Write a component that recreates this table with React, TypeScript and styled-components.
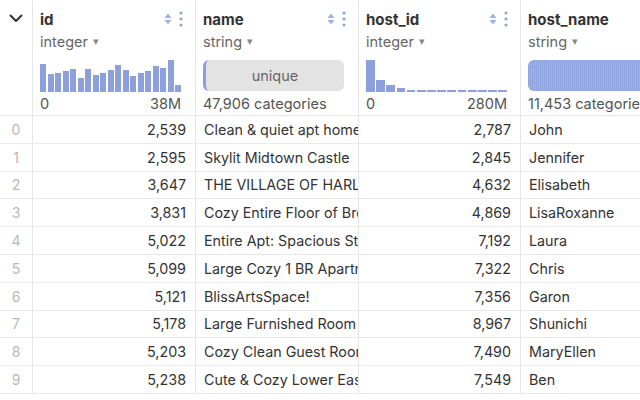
import styled, { createGlobalStyle } from "styled-components";

const GlobalStyle = createGlobalStyle`
  body {
    margin: 0;
    background: #ffffff;
    font-family: "Inter", "Noto Sans", sans-serif;
    color: #333333;
    overflow: hidden;
  }
`;

const COLS = "33px 163px 163px 162px 200px";
const ROW_H = 27.8;

const BAR_COLOR = "#8da0db";

type Column = {
  name: string;
  type: string;
  kind: "hist" | "unique" | "stripes";
  bars?: number[];
  min?: string;
  max?: string;
  categories?: string;
  align: "left" | "right";
};

const COLUMNS: Column[] = [
  {
    name: "id",
    type: "integer",
    kind: "hist",
    bars: [27.7, 17.7, 19, 21, 23, 14.4, 23, 17, 19, 21.7, 27.4, 21.7, 16, 19, 21.4, 26, 23.7, 32, 7.4],
    min: "0",
    max: "38M",
    align: "right",
  },
  {
    name: "name",
    type: "string",
    kind: "unique",
    categories: "47,906 categories",
    align: "left",
  },
  {
    name: "host_id",
    type: "integer",
    kind: "hist",
    bars: [32, 11.7, 6.7, 4, 2.3, 2.3, 2.3, 2.3, 1.7, 1.7, 2.3, 2.3, 1.7, 1.7],
    min: "0",
    max: "280M",
    align: "right",
  },
  {
    name: "host_name",
    type: "string",
    kind: "stripes",
    categories: "11,453 categories",
    align: "left",
  },
];

const ROWS: [string, string, string, string][] = [
  ["2,539", "Clean & quiet apt home by the park", "2,787", "John"],
  ["2,595", "Skylit Midtown Castle", "2,845", "Jennifer"],
  ["3,647", "THE VILLAGE OF HARLEM....NEW YORK !", "4,632", "Elisabeth"],
  ["3,831", "Cozy Entire Floor of Brownstone", "4,869", "LisaRoxanne"],
  ["5,022", "Entire Apt: Spacious Studio/Loft by central park", "7,192", "Laura"],
  ["5,099", "Large Cozy 1 BR Apartment In Midtown East", "7,322", "Chris"],
  ["5,121", "BlissArtsSpace!", "7,356", "Garon"],
  ["5,178", "Large Furnished Room Near B'way", "8,967", "Shunichi"],
  ["5,203", "Cozy Clean Guest Room - Family Apt", "7,490", "MaryEllen"],
  ["5,238", "Cute & Cozy Lower East Side 1 bdrm", "7,549", "Ben"],
];

const SortIcon = () => (
  <svg width="8" height="12" viewBox="0 0 8 12">
    <path d="M4 0.5 L7.5 5 L0.5 5 Z" fill="#9db3df" />
    <path d="M4 11.5 L7.5 7 L0.5 7 Z" fill="#9db3df" />
  </svg>
);

const MenuIcon = () => (
  <svg width="4" height="16" viewBox="0 0 4 16">
    <circle cx="2" cy="2" r="1.6" fill="#8fa6d8" />
    <circle cx="2" cy="8" r="1.6" fill="#8fa6d8" />
    <circle cx="2" cy="14" r="1.6" fill="#8fa6d8" />
  </svg>
);

const Chevron = () => (
  <svg width="14" height="9" viewBox="0 0 14 9">
    <path d="M1.5 1.5 L7 7 L12.5 1.5" fill="none" stroke="#333" strokeWidth="2" strokeLinecap="round" strokeLinejoin="round" />
  </svg>
);

export default function App() {
  return (
    <>
      <GlobalStyle />
      <Grid>
        <HeaderRow>
          <CornerCell>
            <Chevron />
          </CornerCell>
          {COLUMNS.map((col) => (
            <HeaderCell key={col.name}>
              <TitleLine>
                <Title>{col.name}</Title>
                <Icons>
                  <SortIcon />
                  <MenuIcon />
                </Icons>
              </TitleLine>
              <TypeLine>
                {col.type}
                <Caret>▾</Caret>
              </TypeLine>
              {col.kind === "hist" && (
                <>
                  <Histogram>
                    {col.bars!.map((h, i) => (
                      <Bar key={i} style={{ height: h }} />
                    ))}
                  </Histogram>
                  <RangeLine>
                    <span>{col.min}</span>
                    <span>{col.max}</span>
                  </RangeLine>
                </>
              )}
              {col.kind === "unique" && (
                <>
                  <UniquePill>unique</UniquePill>
                  <Categories>{col.categories}</Categories>
                </>
              )}
              {col.kind === "stripes" && (
                <>
                  <StripePill />
                  <Categories>{col.categories}</Categories>
                </>
              )}
            </HeaderCell>
          ))}
        </HeaderRow>
        {ROWS.map((row, r) => (
          <BodyRow key={r}>
            <IndexCell>{r}</IndexCell>
            {row.map((v, c) => (
              <Cell key={c} $align={COLUMNS[c].align}>
                {v}
              </Cell>
            ))}
          </BodyRow>
        ))}
      </Grid>
    </>
  );
}

const Grid = styled.div`
  width: 721px;
  height: 400px;
  overflow: hidden;
`;

const HeaderRow = styled.div`
  display: grid;
  grid-template-columns: ${COLS};
  height: 116px;
  border-bottom: 1px solid #e6e6e6;
  box-sizing: border-box;
`;

const CornerCell = styled.div`
  display: flex;
  justify-content: center;
  padding-top: 14px;
  border-right: 1px solid #e6e6e6;
`;

const HeaderCell = styled.div`
  display: flex;
  flex-direction: column;
  padding: 8px 14px 0 7px;
  border-right: 1px solid #e6e6e6;
  min-width: 0;
`;

const TitleLine = styled.div`
  display: flex;
  align-items: center;
  justify-content: space-between;
  height: 22px;
`;

const Title = styled.span`
  font-size: 15px;
  font-weight: 700;
  color: #333;
  white-space: nowrap;
`;

const Icons = styled.div`
  display: flex;
  align-items: center;
  gap: 7px;
  margin-right: -2px;
`;

const TypeLine = styled.div`
  display: flex;
  align-items: center;
  height: 22px;
  font-size: 14.5px;
  color: #666;
`;

const Caret = styled.span`
  font-size: 11px;
  margin-left: 5px;
  color: #888;
`;

const Histogram = styled.div`
  display: flex;
  align-items: flex-end;
  gap: 1.4px;
  height: 33px;
  margin-top: 7px;
  width: 141px;
`;

const Bar = styled.div`
  flex: 1;
  background: ${BAR_COLOR};
`;

const RangeLine = styled.div`
  display: flex;
  justify-content: space-between;
  width: 141px;
  margin-top: 3px;
  font-size: 14.5px;
  color: #555;
`;

const UniquePill = styled.div`
  display: flex;
  align-items: center;
  justify-content: center;
  box-sizing: border-box;
  margin-top: 8px;
  width: 141px;
  height: 31px;
  background: #e3e3e3;
  border-left: 3px solid #8aa0dc;
  border-radius: 6px;
  font-size: 14.5px;
  color: #666;
`;

const StripePill = styled.div`
  margin-top: 8px;
  width: 160px;
  height: 31px;
  border-radius: 6px;
  background: repeating-linear-gradient(
    90deg,
    #8ea3de 0px,
    #8ea3de 1.4px,
    #9fb2e6 1.4px,
    #9fb2e6 2px
  );
`;

const Categories = styled.div`
  margin-top: 4px;
  font-size: 14.5px;
  color: #555;
  white-space: nowrap;
`;

const BodyRow = styled.div`
  display: grid;
  grid-template-columns: ${COLS};
  height: ${ROW_H}px;
  border-bottom: 1px solid #ebebeb;
  box-sizing: border-box;
`;

const IndexCell = styled.div`
  display: flex;
  align-items: center;
  justify-content: center;
  border-right: 1px solid #e6e6e6;
  font-size: 14px;
  color: #b8b8b8;
`;

const Cell = styled.div<{ $align: "left" | "right" }>`
  display: flex;
  align-items: center;
  justify-content: ${(p) => (p.$align === "right" ? "flex-end" : "flex-start")};
  padding: 0 9px 0 8px;
  border-right: 1px solid #e6e6e6;
  font-size: 14.3px;
  color: #333;
  white-space: nowrap;
  overflow: hidden;
  min-width: 0;
`;
